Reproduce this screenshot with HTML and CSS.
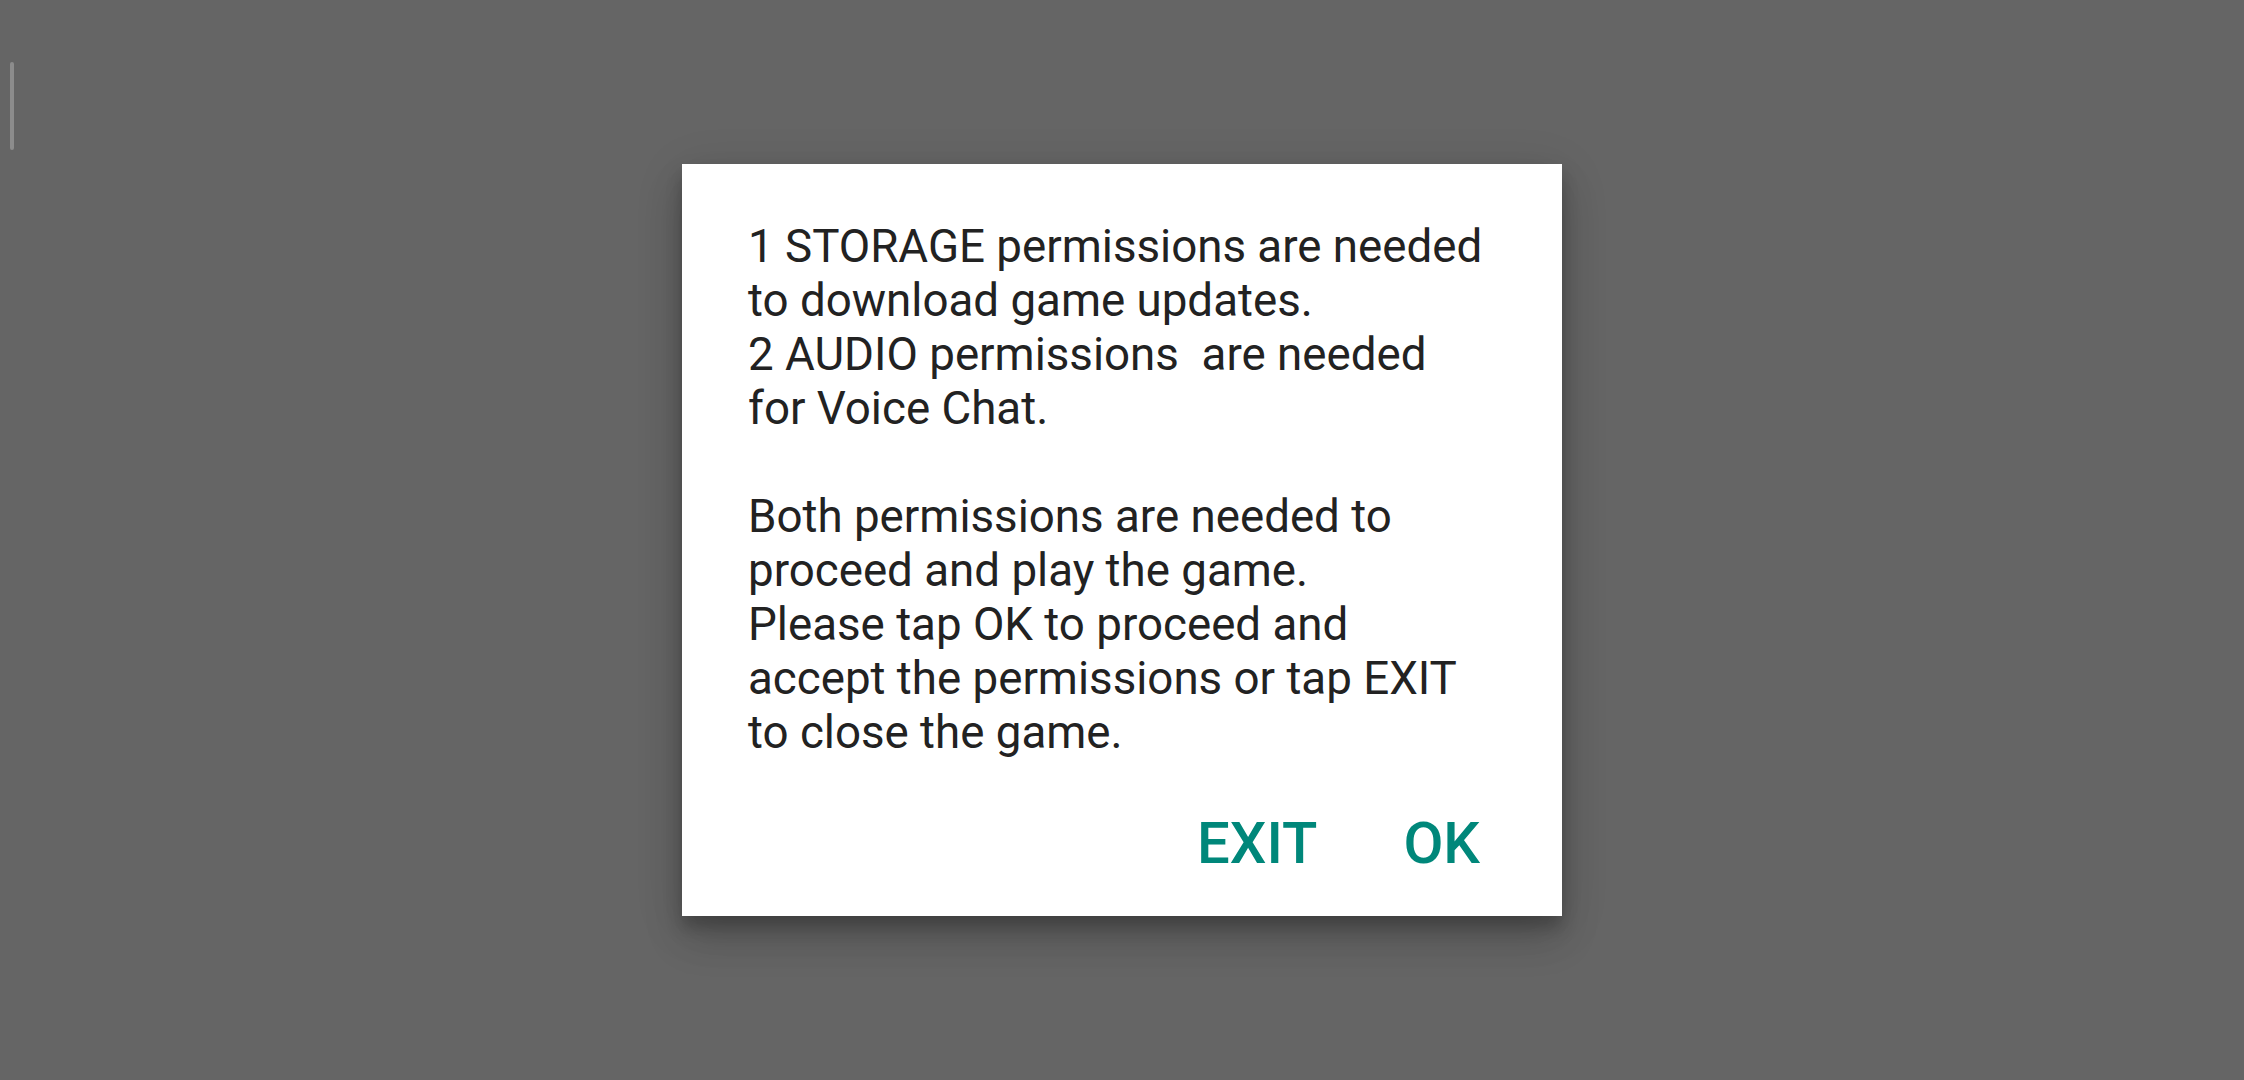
FILE: index.html
```html
<html>

<head>
	<title>Permissions</title>
	<link rel="stylesheet" href="styles.css">
</head>

<body>
	<div class="scrollbar"></div>
	<main class="screen">
		<section class="dialog">
			<p class="message">1 STORAGE permissions are needed<br>
				to download game updates.<br>
				2 AUDIO permissions&nbsp; are needed<br>
				for Voice Chat.<br>
				<br>
				Both permissions are needed to<br>
				proceed and play the game.<br>
				Please tap OK to proceed and<br>
				accept the permissions or tap EXIT<br>
				to close the game.</p>
			<div class="buttons">
				<button class="btn">EXIT</button>
				<button class="btn">OK</button>
			</div>
		</section>
	</main>
</body>

</html>
```

FILE: styles.css
```css
* {
	box-sizing: border-box;
}

body {
	margin: 0;
	background-color: #656565;
	font-family: Roboto, "Noto Sans", sans-serif;
	overflow: hidden;
}

.scrollbar {
	position: absolute;
	left: 10px;
	top: 62px;
	width: 4px;
	height: 88px;
	border-radius: 2px;
	background-color: #8c8c8c;
}

.screen {
	height: 1080px;
	display: flex;
	align-items: center;
	justify-content: center;
}

.dialog {
	width: 880px;
	height: 752px;
	background-color: #fff;
	padding: 56px 66px 0 66px;
	box-shadow: 0 24px 38px rgba(0, 0, 0, 0.14), 0 9px 46px rgba(0, 0, 0, 0.12), 0 11px 15px rgba(0, 0, 0, 0.2);
}

.message {
	margin: 0;
	font-size: 45.7px;
	line-height: 54px;
	color: #222;
	white-space: nowrap;
}

.buttons {
	display: flex;
	justify-content: flex-end;
	gap: 86px;
	margin-top: 49px;
	padding-right: 16px;
}

.btn {
	border: none;
	background: none;
	padding: 0;
	font-family: inherit;
	font-weight: 500;
	font-size: 58px;
	color: #00877a;
}
```
